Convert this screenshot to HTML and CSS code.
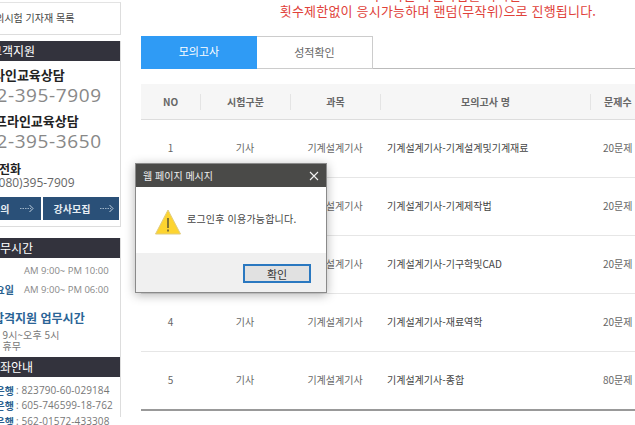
FILE: index.html
```html
<!DOCTYPE html>
<html lang="ko">
<head>
<meta charset="utf-8">
<title>모의고사</title>
<link rel="stylesheet" href="styles.css">
</head>
<body>
<div class="page">
  <aside class="side">
    <div class="side-inner">
      <div class="box box-list"><p class="list-item">모의시험 기자재 목록</p></div>
      <section class="box box-support">
        <h2 class="bar">고객지원</h2>
        <h3 class="tel-title">온라인교육상담</h3>
        <p class="tel">02-395-7909</p>
        <h3 class="tel-title tel-title-off">오프라인교육상담</h3>
        <p class="tel">02-395-3650</p>
        <h3 class="fax-title">팩스전화</h3>
        <p class="fax">(080)395-7909</p>
        <div class="btns">
          <a class="btn btn-a">문의
            <svg class="arrow" width="14" height="9" viewBox="0 0 14 9"><path d="M0 4.5h11" stroke="#9fb4c8" stroke-width="1" stroke-dasharray="1.5 1"/><path d="M9.5 1l3.5 3.5L9.5 8" stroke="#c5d3e0" stroke-width="1" fill="none"/></svg>
          </a>
          <a class="btn btn-b">강사모집
            <svg class="arrow" width="14" height="9" viewBox="0 0 14 9"><path d="M0 4.5h11" stroke="#9fb4c8" stroke-width="1" stroke-dasharray="1.5 1"/><path d="M9.5 1l3.5 3.5L9.5 8" stroke="#c5d3e0" stroke-width="1" fill="none"/></svg>
          </a>
        </div>
      </section>
      <section class="box box-hours">
        <h2 class="bar bar-tight">업무시간</h2>
        <p class="hour hour-first"><b class="hour-day">평일</b><span>AM 9:00~ PM 10:00</span></p>
        <p class="hour"><b class="hour-day">토요일</b><span>AM 9:00~ PM 06:00</span></p>
        <h3 class="pass-title">합격지원 업무시간</h3>
        <p class="pass-text">오전 9시~오후 5시</p>
        <p class="pass-text">주말 휴무</p>
      </section>
      <section class="box box-bank">
        <h2 class="bar bar-tight">계좌안내</h2>
        <p class="bank"><b class="bank-name">국민은행</b><span>: 823790-60-029184</span></p>
        <p class="bank"><b class="bank-name">신한은행</b><span>: 605-746599-18-762</span></p>
        <p class="bank"><b class="bank-name">하나은행</b><span>: 562-01572-433308</span></p>
      </section>
    </div>
  </aside>
  <main class="main">
    <div class="notice">
      <p>모의고사는 회원가입을 하시면</p>
      <p>횟수제한없이 응시가능하며 랜덤(무작위)으로 진행됩니다.</p>
    </div>
    <nav class="tabs">
      <a class="tab tab-on">모의고사</a>
      <a class="tab tab-off">성적확인</a>
    </nav>
    <div class="table">
      <div class="row head">
        <div class="c c1">NO</div><div class="c c2">시험구분</div><div class="c c3">과목</div><div class="c c4">모의고사 명</div><div class="c c5">문제수</div>
      </div>
      <div class="row">
        <div class="c c1">1</div><div class="c c2">기사</div><div class="c c3">기계설계기사</div><div class="c c4 name">기계설계기사-기계설계및기계재료</div><div class="c c5">20문제</div>
      </div>
      <div class="row">
        <div class="c c1">2</div><div class="c c2">기사</div><div class="c c3">기계설계기사</div><div class="c c4 name">기계설계기사-기계제작법</div><div class="c c5">20문제</div>
      </div>
      <div class="row">
        <div class="c c1">3</div><div class="c c2">기사</div><div class="c c3">기계설계기사</div><div class="c c4 name">기계설계기사-기구학및CAD</div><div class="c c5">20문제</div>
      </div>
      <div class="row">
        <div class="c c1">4</div><div class="c c2">기사</div><div class="c c3">기계설계기사</div><div class="c c4 name">기계설계기사-재료역학</div><div class="c c5">20문제</div>
      </div>
      <div class="row">
        <div class="c c1">5</div><div class="c c2">기사</div><div class="c c3">기계설계기사</div><div class="c c4 name">기계설계기사-종합</div><div class="c c5">80문제</div>
      </div>
    </div>
  </main>
</div>
<div class="dialog" role="dialog">
  <div class="dlg-title">
    <span>웹 페이지 메시지</span>
    <svg class="dlg-x" width="10" height="10" viewBox="0 0 10 10"><path d="M1 1l8 8M9 1l-8 8" stroke="#f2f2f2" stroke-width="1.1" fill="none"/></svg>
  </div>
  <div class="dlg-body">
    <svg class="dlg-icon" width="26" height="26" viewBox="0 0 26 26"><path d="M13 1L25.5 25H.5z" fill="#fdd430" stroke="#e0cc80" stroke-width="1"/><path d="M13 9v10" stroke="#333" stroke-width="1.2"/><path d="M13 20.5v2" stroke="#333" stroke-width="1.2"/></svg>
    <p class="dlg-msg">로그인후 이용가능합니다.</p>
  </div>
  <div class="dlg-foot"><button class="dlg-btn">확인</button></div>
</div>
</body>
</html>
```
FILE: styles.css
```css
* { box-sizing: border-box; }
html, body { margin: 0; padding: 0; height: 100%; overflow: hidden; background: #fff; }
body { font-family: "Noto Sans CJK KR", "Noto Sans", sans-serif; color: #555; font-size: 10px; position: relative; }
p, h2, h3 { margin: 0; font-weight: normal; }
.page { display: flex; width: 635px; height: 425px; overflow: hidden; }

.side { width: 121px; flex: none; overflow: hidden; }
.side-inner { width: 150px; margin-left: -29px; }
.box { border-right: 1px solid #ddd; background: #fff; }
.box-list { height: 33px; border-top: 1px solid #e3e3e3; margin-top: 2px; border-bottom: 1px solid #ddd; padding: 5px 0 0 15px; margin-bottom: 6px; }
.list-item { font-size: 10px; line-height: 20px; color: #444; }
.bar { height: 20px; line-height: 20px; background: #33333d; color: #fff; font-size: 12px; padding-left: 20px; }
.bar-tight { padding-left: 18px; }

.box-support { height: 186px; border-bottom: 1px solid #ddd; margin-bottom: 11px; }
.tel-title { font-size: 13px; font-weight: 700; color: #222; line-height: 18px; margin: 5px 0 0 10px; }
.tel-title-off { margin: 5px 0 0 12px; }
.tel { font-family: "Open Sans", sans-serif; font-size: 19px; line-height: 24px; color: #888; padding-left: 14px; letter-spacing: 0.6px; margin-top: -1px; }
.fax-title { font-size: 12px; font-weight: 700; color: #222; line-height: 14px; margin: 9px 0 0 6px; }
.fax { font-family: "Open Sans", sans-serif; font-size: 12px; line-height: 14px; color: #666; padding-left: 24px; margin-top: 0; }
.btns { display: flex; gap: 2px; margin-top: 7px; padding-right: 1px; height: 23px; }
.btn { background: #2a5078; color: #e6edf3; font-size: 10px; font-weight: 700; line-height: 22px; display: flex; align-items: center; white-space: nowrap; }
.btn-a { width: 70px; padding-left: 20px; gap: 11px; }
.btn-b { width: 77px; padding-left: 11px; gap: 10px; }
.arrow { flex: none; }

.box-hours { height: 119px; }
.hour { display: flex; font-size: 9.5px; line-height: 14px; color: #888; }
.hour-first { margin-top: 6px; }
.hour + .hour { margin-top: 5px; }
.hour-day { width: 43px; text-align: right; color: #2a5f8f; font-size: 10px; font-weight: 700; flex: none; }
.hour span { font-family: "Open Sans", sans-serif; margin-left: 10px; white-space: nowrap; }
.hour-first .hour-day { color: #fff; }
.pass-title { font-size: 12px; font-weight: 700; color: #2a6496; line-height: 16px; margin: 13px 0 0 22px; white-space: nowrap; }
.pass-text { font-size: 10px; line-height: 11px; color: #777; padding-left: 10px; margin-top: 3px; letter-spacing: .1px; }
.pass-text + .pass-text { margin-top: 0; }

.box-bank { height: 60px; }
.bank { display: flex; font-size: 10px; line-height: 15.5px; color: #777; white-space: nowrap; }
.bar + .bank { margin-top: 5.5px; }
.bank-name { width: 43px; text-align: right; color: #2a5f8f; font-weight: 700; flex: none; }
.bank span { font-family: "Open Sans", sans-serif; font-size: 10px; letter-spacing: .1px; margin-left: 2px; }

.main { width: 594px; flex: none; margin-left: 20px; }
.notice { text-align: center; color: #e0413a; font-size: 13px; letter-spacing: .2px; line-height: 16px; margin-top: -13px; height: 49px; }
.tabs { display: flex; height: 33px; border-bottom: 1px solid #bbb; }
.tab { width: 116px; height: 33px; font-size: 11px; line-height: 31px; text-align: center; }
.tab-on { background: #2f9bf5; color: #fff; }
.tab-off { border: 1px solid #ccc; border-left: 0; background: #fff; color: #666; }

.table { margin-top: 15px; border-bottom: 2px solid #999; }
.row { display: flex; height: 58px; align-items: center; border-bottom: 1px solid #e6e6e6; padding-bottom: 2px; color: #666; }
.row:last-child { border-bottom: 0; height: 57px; }
.head { height: 36px; background: #f6f6f6; border-bottom: 1px solid #ddd; font-weight: 700; color: #666; padding-bottom: 0; }
.c { text-align: center; white-space: nowrap; flex: none; }
.c1 { width: 59px; }
.c2 { width: 90px; }
.c3 { width: 90px; }
.c4 { width: 210px; }
.c5 { width: 145px; text-align: left; padding-left: 13px; }
.name { text-align: left; padding-left: 7px; color: #444; }
.head .c2, .head .c3, .head .c4, .head .c5 { border-left: 1px solid #e4e4e4; line-height: 16px; }
.head .c4 { text-align: center; }

.dialog { position: absolute; left: 135px; top: 163px; width: 192px; height: 130px; border: 1px solid #8a8a8a; background: #fff; box-shadow: 0 2px 10px rgba(0,0,0,.3); display: flex; flex-direction: column; }
.dlg-title { height: 23px; background: #4a4a48; color: #eee; font-size: 10px; line-height: 23px; padding: 0 7px; display: flex; justify-content: space-between; align-items: center; flex: none; }
.dlg-body { flex: 1; display: flex; align-items: flex-start; padding: 22px 0 0 19px; gap: 6px; }
.dlg-icon { flex: none; }
.dlg-msg { font-size: 10px; letter-spacing: .2px; line-height: 16px; color: #444; margin: 2px 0 0 0; }
.dlg-foot { height: 39px; background: #f0f0f0; flex: none; display: flex; justify-content: flex-end; padding: 11px 15px 0 0; }
.dlg-btn { width: 68px; height: 19px; padding: 0; background: #e1e1e1; border: 2px solid #2a78c0; font-family: "Noto Sans CJK KR", sans-serif; font-size: 11px; line-height: 14px; color: #333; }
```
